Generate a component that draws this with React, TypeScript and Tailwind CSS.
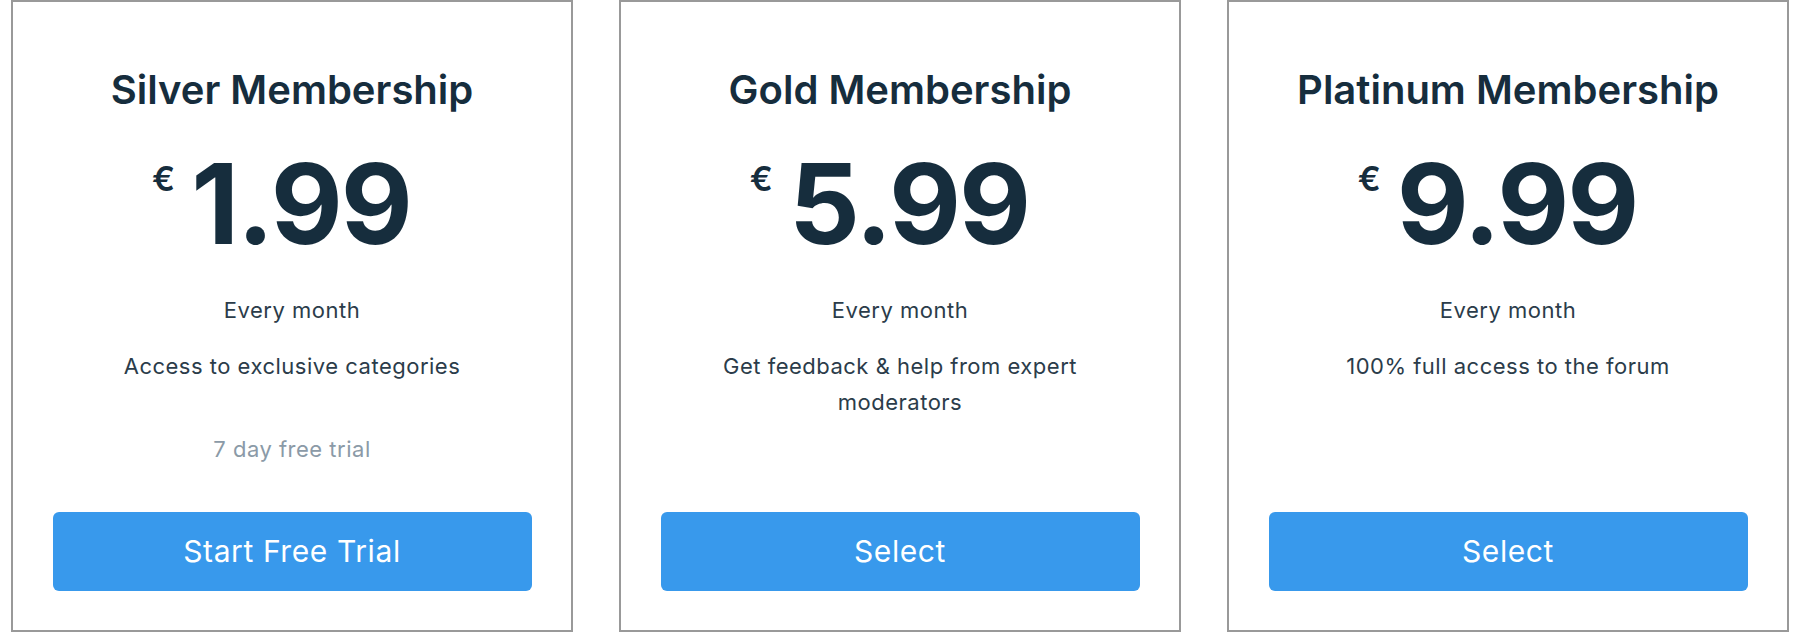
const plans = [
  {
    name: "Silver Membership",
    price: "1.99",
    description: "Access to exclusive categories",
    trial: "7 day free trial",
    cta: "Start Free Trial",
  },
  {
    name: "Gold Membership",
    price: "5.99",
    description: "Get feedback & help from expert moderators",
    cta: "Select",
  },
  {
    name: "Platinum Membership",
    price: "9.99",
    description: "100% full access to the forum",
    cta: "Select",
  },
];

interface Plan {
  name: string;
  price: string;
  description: string;
  trial?: string;
  cta: string;
}

const PlanCard = ({ plan }: { plan: Plan }) => {
  return (
    <div className="flex-1 h-[632px] border-2 border-[#999999] flex flex-col items-center text-center text-[#162d3d] pt-[64px]">
      <h2 className="text-[40px] leading-[48px] font-semibold">{plan.name}</h2>

      <div className="mt-[34px] mr-[21px] flex items-start">
        <span className="text-[34px] leading-none font-semibold mt-[14px] mr-[16px]">
          €
        </span>
        <span className="text-[111px] leading-[111px] font-bold tracking-[-2px]">
          {plan.price}
        </span>
      </div>

      <div className="mt-[37px] text-[22px] leading-[28px] tracking-[0.5px] text-[#2b3c4a]">
        Every month
      </div>
      <div className="mt-[24px] max-w-[420px] text-[22px] leading-[36px] tracking-[0.5px] text-[#2b3c4a]">
        {plan.description}
      </div>
      {plan.trial && (
        <div className="mt-[51px] text-[22px] leading-[28px] tracking-[0.5px] text-[#8b9aa7]">
          {plan.trial}
        </div>
      )}

      <button className="mt-auto mb-[39px] w-[479px] h-[79px] rounded-md bg-[#3899ec] text-white text-[30px] tracking-[0.6px]">
        {plan.cta}
      </button>
    </div>
  );
};

export default function App() {
  return (
    <div
      className="w-full h-[632px] bg-white flex gap-[46px] px-[11px]"
      style={{ fontFamily: "Inter, 'Noto Sans', sans-serif" }}
    >
      {plans.map((plan) => (
        <PlanCard key={plan.name} plan={plan} />
      ))}
    </div>
  );
}
